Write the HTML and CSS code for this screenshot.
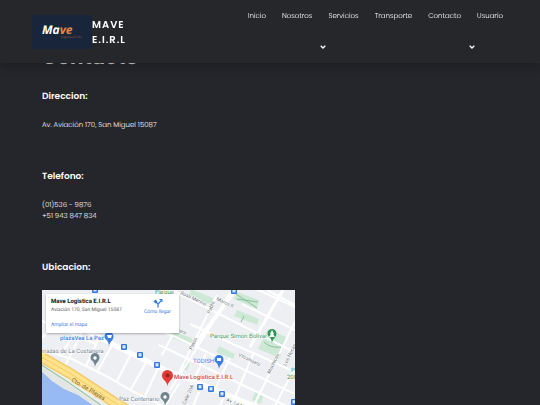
FILE: index.html
```html
<!DOCTYPE html>
<html lang="es">
<head>
<meta charset="utf-8">
<title>Contacto - Mave E.I.R.L</title>
<link rel="stylesheet" href="styles.css">
</head>
<body>
<header class="header">
  <a class="brand" href="#">
    <svg class="logo" viewBox="0 0 60 34" role="img" aria-label="Mave Logistica">
      <rect width="60" height="34" fill="#19253a"/>
      <text class="logo-name" x="10" y="19">Ma<tspan fill="#e8893c">ve</tspan></text>
      <text class="logo-sub" x="29" y="23">Logistica E.I.R.L</text>
    </svg>
    <span class="brand-name">MAVE E.I.R.L</span>
  </a>
  <nav>
    <ul class="menu">
      <li><a href="#">Inicio</a></li>
      <li><a href="#">Nosotros</a></li>
      <li><a href="#">Servicios</a>
        <button class="toggle" aria-label="Abrir Servicios"><svg viewBox="0 0 6 4"><path d="M.7.7 3 3 5.300.7"/></svg></button></li>
      <li><a href="#">Transporte</a></li>
      <li><a href="#">Contacto</a></li>
      <li><a href="#">Usuario</a>
        <button class="toggle" aria-label="Abrir Usuario"><svg viewBox="0 0 6 4"><path d="M.7.7 3 3 5.300.7"/></svg></button></li>
    </ul>
  </nav>
</header>
<main class="content">
  <h1>Contacto</h1>
  <section>
    <h2>Direccion:</h2>
    <p>Av. Aviación 170, San Miguel 15087</p>
  </section>
  <section>
    <h2>Telefono:</h2>
    <p>(01)536 - 9876<br>+51 943 847 834</p>
  </section>
  <section>
    <h2>Ubicacion:</h2>
    <div class="map">
      <svg class="map-art" viewBox="0 0 253 115" role="img" aria-label="Mapa de San Miguel">
        <defs>
          <g id="bus"><rect x="-3" y="-3" width="6" height="6" rx="1" fill="#3478df"/><rect x="-1.500" y="-1.800" width="3" height="2.800" fill="#dce9ff"/><path d="M-1.300 1.500h.8M.5 1.500h.8" stroke="#fff" stroke-width=".7"/></g>
          <path id="pin" d="M0 7C-1-1-4.500 1.500-4.500-2.500a4.500 4.500 0 0 1 9 0C4.500 1.500 1 2 0 7Z"/>
        </defs>
        <rect width="253" height="150" fill="#eeeff2"/>
        <g fill="#cde9d6">
          <path d="m151 0 20 8-2 7-22-10 2-5ZM195 2l22 8-2 9-23-10ZM195 20l22 9-2 6-23-9ZM226 39l18 8-6 21-22-9ZM130 40l21 9-3 6-20-8ZM177 56l16 8-2 5-17-7ZM142 70l6 3-3 8-6-3ZM213 102l8 4-2 8-9-4Z"/>
        </g>
        <g fill="none" stroke="#fff" stroke-width="2">
          <path d="M0 60 30 69 64 86 92 102 121 116"/>
          <path d="M0 31 54 54M22 78 40 42M35 45 46 50M44 76 57 48M55 82 72 52M75 91 90 62M89 99 105 71M103 106 117 76M0 48 12 36 20 30M20 62 36 40"/>
          <path d="M128 100 193-2M136 85 175 5M130 0 250 61M123 42 253 104M117 55 253 120M105 35 130 46 120 65"/>
          <path d="m148 98 16-34M171 103 188 68M191 112 212 62M212 115 253 32M231 119 253 78M148 34 170 44M178 23 188 2M169 44 253 82M200 14 253 40M225 0 253 15M210-3 253 17"/>
          <path d="M138 92 111 135M157 102 141 140M181 109 166 140"/>
        </g>
        <path d="M35 36 82 60 121 79 159 94 198 110 253 132" fill="none" stroke="#fff" stroke-width="5"/>
        <path d="M153 55 193 0" fill="none" stroke="#fff" stroke-width="4"/>
        <path d="M208 57 241 0" fill="none" stroke="#fff" stroke-width="3"/>
        <path d="m194 4 21 14M195 9 216 12M222 52c4 4 10 6 17 5M199 32 202 26" stroke="#78b58d" fill="none" stroke-width=".8"/>
        <path d="M0 73 28 93 66 118 110 150 0 150Z" fill="#e2e6e4"/>
        <path d="M0 82 10 91 22 99 36 105 49 114 63 121 100 150H0Z" fill="#97b9f4"/>
        <path d="M-2 74 26 92 63 118" stroke="#8ac28e" fill="none" stroke-width="1"/>
        <path d="M-4 65 29 84 75 114 125 144" stroke="#f4ca67" fill="none" stroke-width="11"/>
        <path d="M-4 65 29 84 75 114 125 144" stroke="#fee28c" fill="none" stroke-width="8"/>
        <path d="M-4 65 29 84 75 114 125 144" stroke="#f4ca67" fill="none" stroke-width="1"/>
        <g class="street">
          <text transform="translate(29 91) rotate(31)" class="coast">Cto. de Playas</text>
          <text transform="translate(138 4) rotate(25)">Rosa Merino</text>
          <text transform="translate(174 10) rotate(25)">Marco II</text>
          <text transform="translate(168 24) rotate(-68)">Pablo</text>
          <text transform="translate(196 66) rotate(25)">Vilcahuara</text>
          <text transform="translate(228 84) rotate(-64)">Mochicas</text>
          <text transform="translate(244 76) rotate(-64)">Los Nocas</text>
          <text transform="translate(143 115) rotate(-65)">Calle 20A</text>
          <text transform="translate(184 111) rotate(23)">Av. La Marina</text>
          <text transform="translate(131 39) rotate(25)">Huara</text>
          <text transform="translate(150 60) rotate(-65)">Pablo</text>
        </g>
        <use href="#bus" x="53" y="0"/><use href="#bus" x="192" y="1"/><use href="#bus" x="82" y="57"/><use href="#bus" x="98" y="65"/><use href="#bus" x="115" y="75"/><use href="#bus" x="158" y="97"/><use href="#bus" x="169" y="99"/><use href="#bus" x="180" y="104"/><use href="#bus" x="252" y="112"/>
        <g class="place">
          <text x="113" y="4" fill="#42955d">Parque</text>
          <text x="168" y="48" fill="#42955d">Parque Simón Bolívar</text>
          <text x="249" y="82" fill="#42955d">Pa</text><text x="245" y="89" fill="#42955d">200</text>
          <text x="18" y="50" fill="#3b7de0" font-weight="500">plazaVea La Paz</text>
          <text x="151" y="73" fill="#3b7de0">TODISH</text>
          <text x="-3" y="63" fill="#73808c">errazas de La Costanera</text>
          <text x="77" y="111" fill="#73808c">Paz Centenario</text>
          <text x="132" y="89" fill="#d04249" font-weight="500">Mave Logistica E.I.R.L</text>
        </g>
        <g fill="#32975b"><use href="#pin" x="230" y="46"/></g>
        <path d="m230 40-2 4h1l-2 3h6l-2-3h1Z" fill="#fff"/>
        <g fill="#3b7de0"><use href="#pin" x="67" y="49"/><use href="#pin" x="177" y="72"/></g>
        <path d="m65 45 1 3h3l1-3ZM175 68h4v3h-4Z" fill="#fff"/>
        <g fill="#718591"><use href="#pin" x="53" y="70"/><use href="#pin" x="123" y="109"/></g>
        <g fill="#fff"><circle cx="53" cy="68" r="1.700"/><circle cx="123" cy="107" r="1.700"/></g>
        <path d="M125.500 96c-1-6-5.500-6-5.500-10.500a5.500 5.500 0 0 1 11 0c0 4.500-4.500 4.500-5.500 10.500Z" fill="#e53935"/>
        <circle cx="125.500" cy="85.500" r="2" fill="#9d2020"/>
      </svg>
      <div class="card">
        <div>
          <strong>Mave Logistica E.I.R.L</strong>
          <span>Aviación 170, San Miguel 15087</span>
          <a href="#">Ampliar el mapa</a>
        </div>
        <a class="directions" href="#">
          <svg viewBox="0 0 10 10"><path d="M5 9.500V6L2.500 3.500M5 6l3-3" fill="none" stroke="#3b7de0" stroke-width="1.300"/><path d="m2.500 1.500 2 2-2 2-2-2ZM6 1h3.500v3.500Z" fill="#3b7de0"/></svg>
          Cómo llegar
        </a>
      </div>
    </div>
  </section>
</main>
</body>
</html>
```

FILE: styles.css
```css
* { box-sizing: border-box; }

body {
  margin: 0;
  background: #25262b;
  color: #fff;
  font-family: Poppins, Inter, sans-serif;
  font-size: 7px;
  font-weight: 300;
  text-rendering: geometricPrecision;
}

a { color: inherit; text-decoration: none; }

.header {
  position: fixed;
  inset: 0 0 auto;
  z-index: 2;
  display: flex;
  justify-content: space-between;
  min-height: 63px;
  padding: 0 37px 0 32px;
  background: #26272b;
  box-shadow: 0 3px 10px rgba(0, 0, 0, 0.25);
}

.brand { display: flex; align-items: center; }
.logo { width: 60px; height: 34px; }
.logo-name { font: italic 700 12px "Open Sans", sans-serif; fill: #fff; }
.logo-sub { font: 3px "Open Sans", sans-serif; fill: #a46340; }

.brand-name {
  width: 40px;
  font-size: 10px;
  font-weight: 600;
  line-height: 15px;
  letter-spacing: 1px;
}

.menu {
  display: flex;
  gap: 16px;
  margin: 0;
  padding: 11px 0 0;
  list-style: none;
  line-height: 12px;
  color: #fff;
}

.toggle {
  display: block;
  width: 6px;
  height: 6px;
  margin: 21px 0 0 -8px;
  padding: 0;
  border: 0;
  background: none;
}

.toggle svg { display: block; width: 6px; height: 4px; fill: none; stroke: #fff; stroke-width: 1.3; }

.content { padding: 44px 42px 0; }
h1 { margin: 0 0 20px; font-size: 20px; line-height: 26px; color: #d0d0d3; }
h2 { margin: 0; font-size: 9px; font-weight: 600; line-height: 14px; }
p { margin: 16px 0 39px; line-height: 11px; color: #fff; }

.map { position: relative; width: 55%; min-width: 253px; margin-top: 15px; }
.map-art { display: block; width: 100%; }
.place { font: 6px Roboto, sans-serif; paint-order: stroke; stroke: #fff; stroke-width: 1px; }
.street { font: 5px Roboto, sans-serif; fill: #6c737b; paint-order: stroke; stroke: #fff; stroke-width: 1px; }
.coast { font-size: 6px; fill: #7c5e32; stroke: #fee28c; }

.card {
  position: absolute;
  top: 4px;
  left: 4px;
  display: flex;
  justify-content: space-between;
  width: 133px;
  padding: 3px 8px 3px 5px;
  background: #fff;
  color: #5f6368;
  font: 5px/9px Roboto, sans-serif;
  box-shadow: 0 1px 2px rgba(0, 0, 0, 0.3);
}

.card strong, .card span, .card a { display: block; white-space: nowrap; }
.card strong { color: #111; font-size: 6px; }
.card a { color: #3b7de0; }
.card span { margin-bottom: 6px; }
.directions { text-align: center; }
.directions svg { display: block; width: 10px; height: 10px; margin: 1px auto 0; }
```
